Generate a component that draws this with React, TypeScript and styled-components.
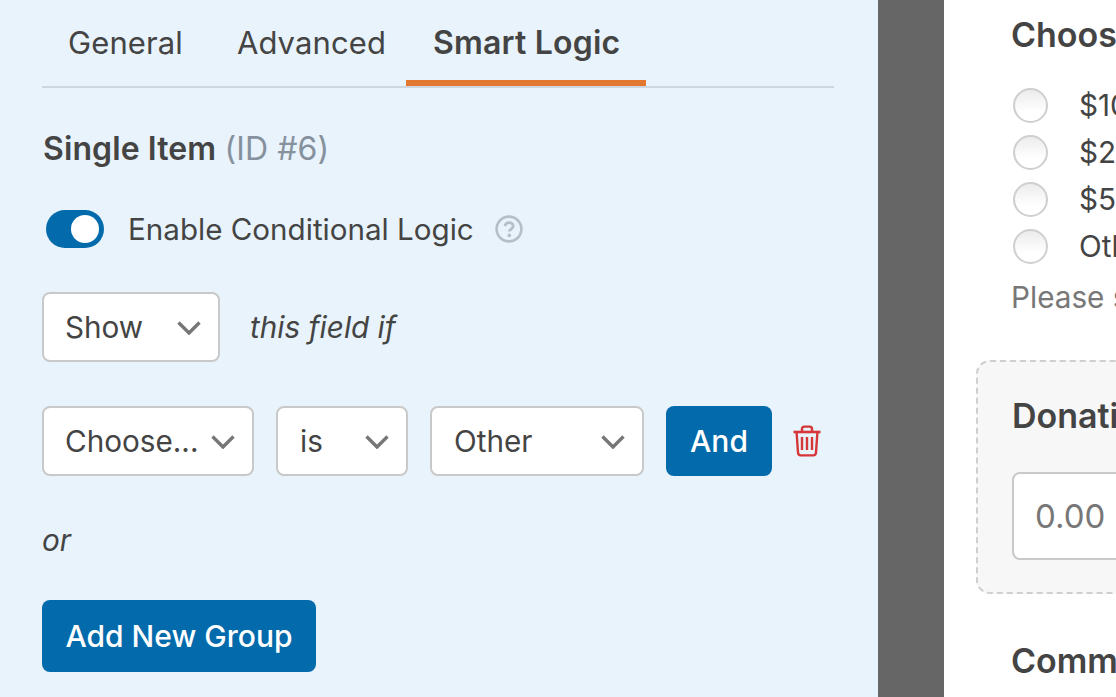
import styled, { createGlobalStyle } from "styled-components";

const Global = createGlobalStyle`
  html, body { margin: 0; padding: 0; background: #fff; }
  body { font-family: Inter, "Liberation Sans", sans-serif; color: #444; overflow: hidden; }
`;

const Page = styled.div`
  display: flex;
  width: 1116px;
  height: 697px;
  overflow: hidden;
`;

const Panel = styled.div`
  flex: 0 0 878px;
  box-sizing: border-box;
  padding: 0 44px 0 42px;
  background: #e8f3fb;
`;

const Tabs = styled.div`
  display: flex;
  height: 88px;
  box-sizing: border-box;
  border-bottom: 2px solid #ced7e0;
`;

const Tab = styled.div<{ $left: number; $right: number }>`
  height: 80px;
  line-height: 85px;
  padding: 0 ${(p) => p.$right}px 0 ${(p) => p.$left}px;
  font-size: 31px;
  letter-spacing: 0.1px;
  color: #444;
  border-bottom: 6px solid transparent;
`;

const ActiveTab = styled(Tab)`
  font-size: 32px;
  letter-spacing: 0.2px;
  font-weight: 600;
  border-bottom-color: #e27730;
`;

const Heading = styled.h2`
  margin: 42px 0 0 1px;
  font-size: 32px;
  line-height: 38px;
  letter-spacing: 0.1px;
  font-weight: 600;
  color: #444;
`;

const IdText = styled.span`
  font-weight: 400;
  color: #86919e;
`;

const ToggleRow = styled.div`
  display: flex;
  align-items: center;
  margin: 42px 0 0 4px;
  height: 38px;
`;

const Toggle = styled.div`
  position: relative;
  width: 58px;
  height: 38px;
  border-radius: 19px;
  background: #036aab;
`;

const Knob = styled.span`
  position: absolute;
  top: 5px;
  right: 5px;
  width: 28px;
  height: 28px;
  border-radius: 50%;
  background: #fff;
`;

const ToggleLabel = styled.span`
  margin-left: 24px;
  font-size: 29.6px;
  color: #444;
`;

const Help = styled.svg`
  margin-left: 21px;
  width: 28px;
  height: 28px;
`;

const Row = styled.div<{ $top: number }>`
  display: flex;
  align-items: center;
  margin-top: ${(p) => p.$top}px;
`;

const Select = styled.div<{ $width: number; $gap?: number; $pad?: number }>`
  display: flex;
  align-items: center;
  justify-content: space-between;
  box-sizing: border-box;
  width: ${(p) => p.$width}px;
  height: 70px;
  margin-right: ${(p) => p.$gap ?? 0}px;
  padding: 0 17px 0 ${(p) => p.$pad ?? 21}px;
  background: #fff;
  border: 2px solid #c9c9c9;
  border-radius: 8px;
  font-size: 29.7px;
  color: #444;
`;

const Caret = styled.svg`
  flex: none;
  width: 24px;
  height: 14px;
  margin-top: 2px;
`;

const Hint = styled.em`
  margin-left: 30px;
  font-size: 29.7px;
  color: #444;
`;

const PrimaryButton = styled.div<{ $width: number; $height: number }>`
  display: flex;
  align-items: center;
  justify-content: center;
  width: ${(p) => p.$width}px;
  height: ${(p) => p.$height}px;
  background: #036aab;
  border-radius: 8px;
  color: #fff;
  font-size: 30px;
  font-weight: 500;
`;

const Trash = styled.svg`
  margin-left: 21px;
  width: 28px;
  height: 32px;
`;

const OrText = styled.div`
  margin-top: 46px;
  height: 36px;
  line-height: 36px;
  font-size: 29.7px;
  font-style: italic;
  color: #444;
`;

const AddGroup = styled(PrimaryButton)`
  margin-top: 42px;
`;

const Divider = styled.div`
  flex: 0 0 66px;
  background: #666;
`;

const Preview = styled.div`
  flex: 1;
  min-width: 0;
  overflow: hidden;
  padding: 13px 0 0 67px;
  white-space: nowrap;
`;

const FieldLabel = styled.div`
  font-size: 34px;
  line-height: 44px;
  font-weight: 600;
  color: #444;
`;

const Choices = styled.div`
  display: grid;
  row-gap: 11px;
  margin-top: 30px;
`;

const Choice = styled.div`
  display: flex;
  align-items: center;
  height: 36px;
  font-size: 29.7px;
  color: #444;
`;

const Radio = styled.span`
  flex: none;
  box-sizing: border-box;
  width: 35px;
  height: 35px;
  margin: 0 31px 0 2px;
  border-radius: 50%;
  border: 2px solid #cfcfcf;
  background: linear-gradient(#ececec, #fff 70%);
`;

const Description = styled.div`
  margin-top: 13px;
  font-size: 29.7px;
  line-height: 40px;
  color: #777;
`;

const Dropzone = styled.div`
  box-sizing: border-box;
  margin: 43px 0 0 -35px;
  width: 300px;
  height: 234px;
  padding: 32px 0 0 34px;
  background: #f7f7f7;
  border: 2px dashed #cfcfcf;
  border-radius: 14px;
`;

const AmountInput = styled.div`
  box-sizing: border-box;
  width: 260px;
  height: 88px;
  margin-top: 34px;
  padding-left: 21px;
  line-height: 84px;
  font-size: 33px;
  color: #777;
  background: #fff;
  border: 2px solid #c9c9c9;
  border-radius: 8px;
`;

const NextLabel = styled(FieldLabel)`
  margin-top: 45px;
`;

const CaretIcon = () => (
  <Caret viewBox="0 0 24 14" fill="none" stroke="#777" strokeWidth="3.4">
    <path d="M1.5 1.5 12 12 22.5 1.5" />
  </Caret>
);

const choices = ["$10.00", "$25.00", "$50.00", "Other"];

export default function App() {
  return (
    <Page>
      <Global />
      <Panel>
        <Tabs>
          <Tab $left={26} $right={27}>General</Tab>
          <Tab $left={27} $right={20}>Advanced</Tab>
          <ActiveTab $left={27} $right={26}>Smart Logic</ActiveTab>
        </Tabs>
        <Heading>
          Single Item <IdText>(ID #6)</IdText>
        </Heading>
        <ToggleRow>
          <Toggle>
            <Knob />
          </Toggle>
          <ToggleLabel>Enable Conditional Logic</ToggleLabel>
          <Help viewBox="0 0 28 28" fill="none">
            <circle cx="14" cy="14" r="12.4" stroke="#b6bfc9" strokeWidth="2.6" />
            <path d="M10 11.2c.3-2.4 2-3.6 4.2-3.6 2.3 0 4 1.4 4 3.4 0 1.6-.9 2.4-2.2 3.2-1.1.7-1.6 1.2-1.6 2.4" stroke="#b6bfc9" strokeWidth="2.8" />
            <circle cx="14.3" cy="20.4" r="1.8" fill="#b6bfc9" />
          </Help>
        </ToggleRow>
        <Row $top={44}>
          <Select $width={178}>
            Show
            <CaretIcon />
          </Select>
          <Hint>this field if</Hint>
        </Row>
        <Row $top={44}>
          <Select $width={212} $gap={22}>
            Choose...
            <CaretIcon />
          </Select>
          <Select $width={132} $gap={22} $pad={22}>
            is
            <CaretIcon />
          </Select>
          <Select $width={214} $gap={22} $pad={22}>
            Other
            <CaretIcon />
          </Select>
          <PrimaryButton $width={106} $height={70}>And</PrimaryButton>
          <Trash viewBox="0 0 28 32" fill="none" stroke="#d63638" strokeWidth="2.4">
            <path d="M.5 7h27" strokeWidth="2.6" />
            <path d="M9 6.5V4c0-1.4.9-2.4 2.3-2.4h5.4C18.1 1.6 19 2.6 19 4v2.5" />
            <path d="M3.6 7.5 5 27.5c.1 1.8 1 2.9 2.8 2.9h12.4c1.8 0 2.7-1.1 2.8-2.9l1.4-20" />
            <path d="M9 12v13M14 12v13M19 12v13" />
          </Trash>
        </Row>
        <OrText>or</OrText>
        <AddGroup $width={274} $height={72}>Add New Group</AddGroup>
      </Panel>
      <Divider />
      <Preview>
        <FieldLabel>Choose an Amount</FieldLabel>
        <Choices>
          {choices.map((c) => (
            <Choice key={c}>
              <Radio />
              {c}
            </Choice>
          ))}
        </Choices>
        <Description>Please select an amount</Description>
        <Dropzone>
          <FieldLabel>Donation Amount</FieldLabel>
          <AmountInput>0.00</AmountInput>
        </Dropzone>
        <NextLabel>Comments</NextLabel>
      </Preview>
    </Page>
  );
}
